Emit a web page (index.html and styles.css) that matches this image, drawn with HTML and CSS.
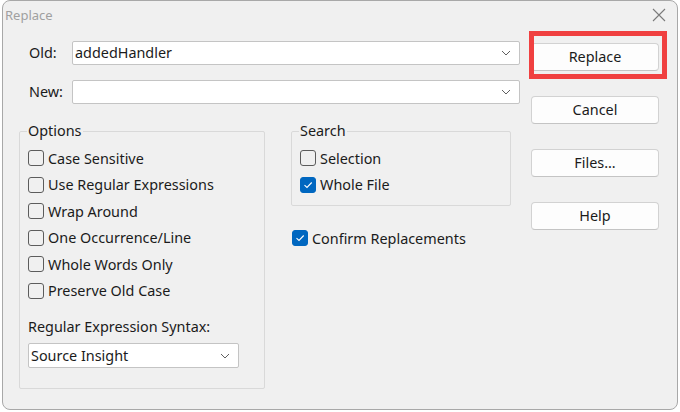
FILE: index.html
```html
<!DOCTYPE html>
<html lang="en">
<head>
<meta charset="utf-8">
<title>Replace</title>
<link rel="stylesheet" href="styles.css">
</head>
<body>
<div class="dialog">
  <div class="titlebar">
    <span class="title">Replace</span>
    <svg class="close" width="14" height="14" viewBox="0 0 14 14"><path d="M1 1 L13 13 M13 1 L1 13" stroke="#7a7a7a" stroke-width="1.1" fill="none"/></svg>
  </div>
  <div class="content">
    <div class="left">
      <div class="field-row first">
        <label class="field-label">Old:</label>
        <div class="combo wide"><span class="combo-text">addedHandler</span><svg class="chev" width="10" height="6" viewBox="0 0 10 6"><path d="M1 1 L5 5 L9 1" stroke="#606060" stroke-width="1" fill="none"/></svg></div>
      </div>
      <div class="field-row second">
        <label class="field-label">New:</label>
        <div class="combo wide"><span class="combo-text"></span><svg class="chev" width="10" height="6" viewBox="0 0 10 6"><path d="M1 1 L5 5 L9 1" stroke="#606060" stroke-width="1" fill="none"/></svg></div>
      </div>
      <div class="groups">
        <fieldset class="group options">
          <legend>Options</legend>
          <div class="check"><span class="box"></span><span>Case Sensitive</span></div>
          <div class="check"><span class="box"></span><span>Use Regular Expressions</span></div>
          <div class="check"><span class="box"></span><span>Wrap Around</span></div>
          <div class="check"><span class="box"></span><span>One Occurrence/Line</span></div>
          <div class="check"><span class="box"></span><span>Whole Words Only</span></div>
          <div class="check"><span class="box"></span><span>Preserve Old Case</span></div>
          <div class="syntax-label">Regular Expression Syntax:</div>
          <div class="combo small"><span class="combo-text">Source Insight</span><svg class="chev" width="10" height="6" viewBox="0 0 10 6"><path d="M1 1 L5 5 L9 1" stroke="#606060" stroke-width="1" fill="none"/></svg></div>
        </fieldset>
        <div class="search-col">
          <fieldset class="group search">
            <legend>Search</legend>
            <div class="check"><span class="box"></span><span>Selection</span></div>
            <div class="check"><span class="box checked"><svg width="10" height="8" viewBox="0 0 10 8"><path d="M1.5 4.2 L4 6.5 L8.7 1.5" stroke="#fff" stroke-width="1.1" fill="none"/></svg></span><span>Whole File</span></div>
          </fieldset>
          <div class="check confirm"><span class="box checked"><svg width="10" height="8" viewBox="0 0 10 8"><path d="M1.5 4.2 L4 6.5 L8.7 1.5" stroke="#fff" stroke-width="1.1" fill="none"/></svg></span><span>Confirm Replacements</span></div>
        </div>
      </div>
    </div>
    <div class="buttons">
      <div class="btn-wrap">
        <button class="btn">Replace</button>
        <span class="highlight"></span>
      </div>
      <button class="btn">Cancel</button>
      <button class="btn">Files...</button>
      <button class="btn">Help</button>
    </div>
  </div>
</div>
</body>
</html>
```
FILE: styles.css
```css
* { box-sizing: border-box; }
html, body { margin: 0; padding: 0; }
body {
  background: #ffffff;
  font-family: "Noto Sans", "Open Sans", sans-serif;
  font-size: 14.4px;
  color: #1b1b1b;
  width: 680px;
  height: 412px;
  overflow: hidden;
}
.dialog {
  margin-left: 2px;
  width: 676px;
  height: 410px;
  background: #f0f0f0;
  border: 1px solid #a8a8a8;
  border-radius: 8px;
}
.titlebar {
  height: 29px;
  display: flex;
  align-items: center;
  justify-content: space-between;
  padding: 0 11px 0 2px;
}
.title {
  font-size: 13px;
  color: #a0a0a0;
  line-height: 16px;
  margin-top: -1px;
}
.close { margin-top: -1px; }
.content {
  display: flex;
  padding-left: 16px;
  gap: 11px;
}
.left { width: 501px; }
.field-row {
  display: flex;
  align-items: center;
  padding-left: 10px;
}
.field-row.first { margin-top: 11px; }
.field-row.second { margin-top: 15px; }
.field-label {
  width: 43px;
  line-height: 20px;
}
.combo {
  background: #ffffff;
  border: 1px solid #c4c4c4;
  border-radius: 2px;
  display: flex;
  align-items: center;
  justify-content: space-between;
  padding: 0 8px 0 2px;
}
.combo.wide { width: 448px; height: 24px; }
.combo.small { width: 211px; height: 25px; margin-top: 6px; }
.combo-text { line-height: 20px; }
.chev { display: block; }
.groups {
  display: flex;
  align-items: flex-start;
  gap: 26px;
  margin-top: 17px;
}
.group {
  margin: 0;
  border: 1px solid #d9d9d9;
  border-radius: 2px;
  padding: 4px 8px 0 8px;
}
.group legend {
  padding: 0 1px;
  margin-left: -1px;
  line-height: 20px;
}
.options { width: 246px; padding-bottom: 20px; }
.search { width: 220px; padding-bottom: 7px; }
.check {
  display: flex;
  align-items: center;
  gap: 4px;
  height: 26.5px;
  white-space: nowrap;
}
.box {
  width: 16px;
  height: 16px;
  border: 1px solid #5c5c5c;
  border-radius: 3px;
  display: flex;
  align-items: center;
  justify-content: center;
  flex: none;
}
.box.checked {
  background: #0067c0;
  border-color: #0067c0;
}
.syntax-label {
  margin-top: 13px;
  line-height: 20px;
}
.search-col { display: flex; flex-direction: column; }
.check.confirm {
  margin-top: 19px;
  padding-left: 1px;
}
.buttons {
  display: flex;
  flex-direction: column;
  gap: 25px;
  margin-top: 13px;
}
.btn-wrap { position: relative; width: 128px; height: 28px; }
.btn {
  display: block;
  width: 128px;
  height: 28px;
  background: #fdfdfd;
  border: 1px solid #d2d2d2;
  border-bottom-color: #c4c4c4;
  border-radius: 4px;
  font-family: "Noto Sans", "Open Sans", sans-serif;
  font-size: 14.4px;
  color: #1b1b1b;
  padding: 0;
  line-height: 20px;
}
.highlight {
  position: absolute;
  left: -2px;
  top: -12px;
  right: -8px;
  bottom: -8px;
  border: 5px solid #f04040;
}
```
